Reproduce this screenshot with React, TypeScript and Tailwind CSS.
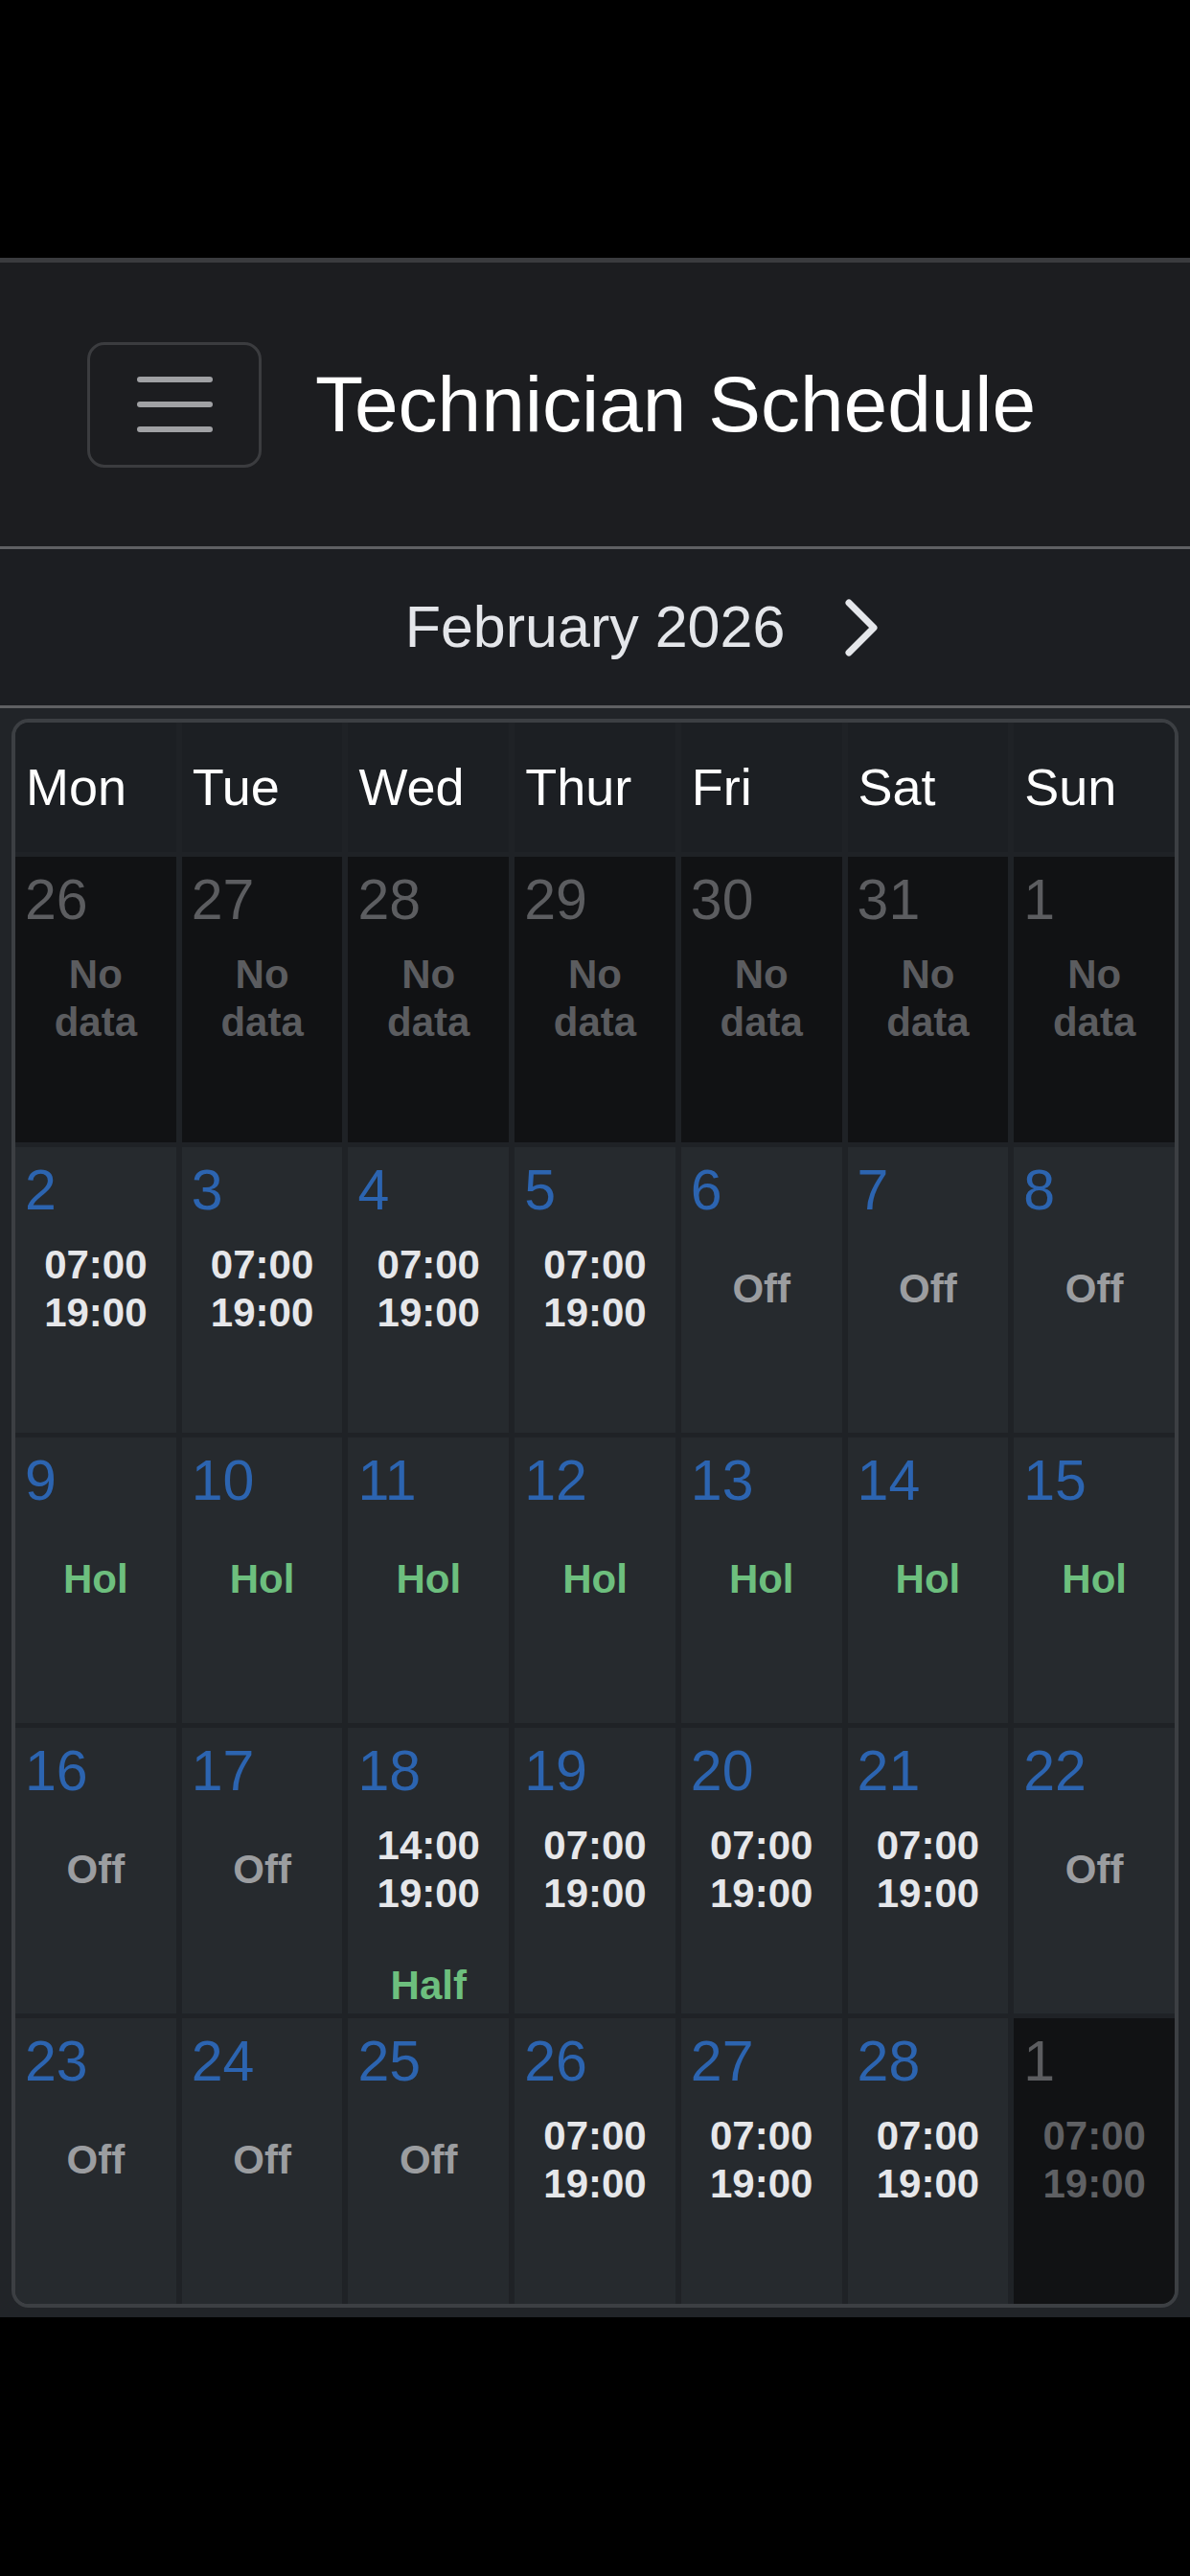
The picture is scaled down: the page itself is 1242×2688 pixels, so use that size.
import React from "react";

type Kind = "nodata" | "time" | "off" | "hol";
type Cell = { d: number; dim?: boolean; kind: Kind; t?: [string, string]; half?: boolean };

const T: [string, string] = ["07:00", "19:00"];

const rows: Cell[][] = [
  [26, 27, 28, 29, 30, 31, 1].map((d) => ({ d, dim: true, kind: "nodata" as Kind })),
  [
    { d: 2, kind: "time", t: T },
    { d: 3, kind: "time", t: T },
    { d: 4, kind: "time", t: T },
    { d: 5, kind: "time", t: T },
    { d: 6, kind: "off" },
    { d: 7, kind: "off" },
    { d: 8, kind: "off" },
  ],
  [9, 10, 11, 12, 13, 14, 15].map((d) => ({ d, kind: "hol" as Kind })),
  [
    { d: 16, kind: "off" },
    { d: 17, kind: "off" },
    { d: 18, kind: "time", t: ["14:00", "19:00"], half: true },
    { d: 19, kind: "time", t: T },
    { d: 20, kind: "time", t: T },
    { d: 21, kind: "time", t: T },
    { d: 22, kind: "off" },
  ],
  [
    { d: 23, kind: "off" },
    { d: 24, kind: "off" },
    { d: 25, kind: "off" },
    { d: 26, kind: "time", t: T },
    { d: 27, kind: "time", t: T },
    { d: 28, kind: "time", t: T },
    { d: 1, dim: true, kind: "time", t: T },
  ],
];

const days = ["Mon", "Tue", "Wed", "Thur", "Fri", "Sat", "Sun"];

function DayCell({ c }: { c: Cell }) {
  return (
    <div
      className={
        "flex h-[298px] flex-col " + (c.dim ? "bg-[#111214]" : "bg-[#262a2e]")
      }
    >
      <div
        className={
          "pl-[10px] pt-[16px] text-[59px] leading-none " +
          (c.dim ? "text-[#5c5d60]" : "text-[#2c64b0]")
        }
      >
        {c.d}
      </div>
      <div className="flex h-[146px] flex-col items-center justify-center text-[42px] font-bold leading-[50px]">
        {c.kind === "nodata" && (
          <>
            <div className="text-[#5b5c5f]">No</div>
            <div className="text-[#5b5c5f]">data</div>
          </>
        )}
        {c.kind === "time" && c.t && (
          <>
            <div className={c.dim ? "text-[#5f6063]" : "text-[#e6e7ea]"}>{c.t[0]}</div>
            <div className={c.dim ? "text-[#5f6063]" : "text-[#e6e7ea]"}>{c.t[1]}</div>
          </>
        )}
        {c.kind === "off" && <div className="text-[#9b9da0]">Off</div>}
        {c.kind === "hol" && <div className="text-[#6dbf7e]">Hol</div>}
      </div>
      {c.half && (
        <div className="mt-[23px] text-center text-[42px] font-bold leading-[50px] text-[#6dbf7e]">
          Half
        </div>
      )}
    </div>
  );
}

export default function App() {
  return (
    <div
      className="h-[2688px] w-[1242px] bg-black pt-[269px]"
      style={{ fontFamily: '"Liberation Sans", Arial, sans-serif' }}
    >
      <div className="border-t-[5px] border-[#3a3b3e] bg-[#1c1d20]">
        <div className="flex h-[296px] items-center gap-[56px] pl-[91px]">
          <div className="flex h-[131px] w-[182px] flex-col items-center justify-center gap-[20px] rounded-[18px] border-[3px] border-[#3b3c3f]">
            <div className="h-[6px] w-[79px] rounded-full bg-[#a0a1a4]" />
            <div className="h-[6px] w-[79px] rounded-full bg-[#a0a1a4]" />
            <div className="h-[6px] w-[79px] rounded-full bg-[#a0a1a4]" />
          </div>
          <div className="text-[82px] leading-none text-white">Technician Schedule</div>
        </div>
      </div>
      <div className="border-y-[3px] border-[#5f6063] bg-[#1c1e22]">
        <div className="flex h-[163px] items-center justify-center gap-[62px]">
          <div className="w-[36px]" />
          <div className="text-[61px] leading-none text-[#e4e6ea]">February 2026</div>
          <svg width="36" height="60" viewBox="0 0 36 60" fill="none">
            <polyline
              points="5,4 31,30 5,56"
              stroke="#e5e7eb"
              strokeWidth="7"
              strokeLinecap="round"
              strokeLinejoin="round"
            />
          </svg>
        </div>
      </div>
      <div className="bg-[#212428] px-[12px] pb-[10px] pt-[11px]">
        <div className="overflow-hidden rounded-[18px] border-[4px] border-[#3c3f43] bg-[#1f2226]">
          <div className="grid grid-cols-7 gap-x-[6px] gap-y-[5px]">
            {days.map((d) => (
              <div
                key={d}
                className="flex h-[135px] items-center bg-[#1c1f23] pl-[11px] text-[54px] text-white"
              >
                {d}
              </div>
            ))}
            {rows.flat().map((c, i) => (
              <DayCell key={i} c={c} />
            ))}
          </div>
        </div>
      </div>
    </div>
  );
}
